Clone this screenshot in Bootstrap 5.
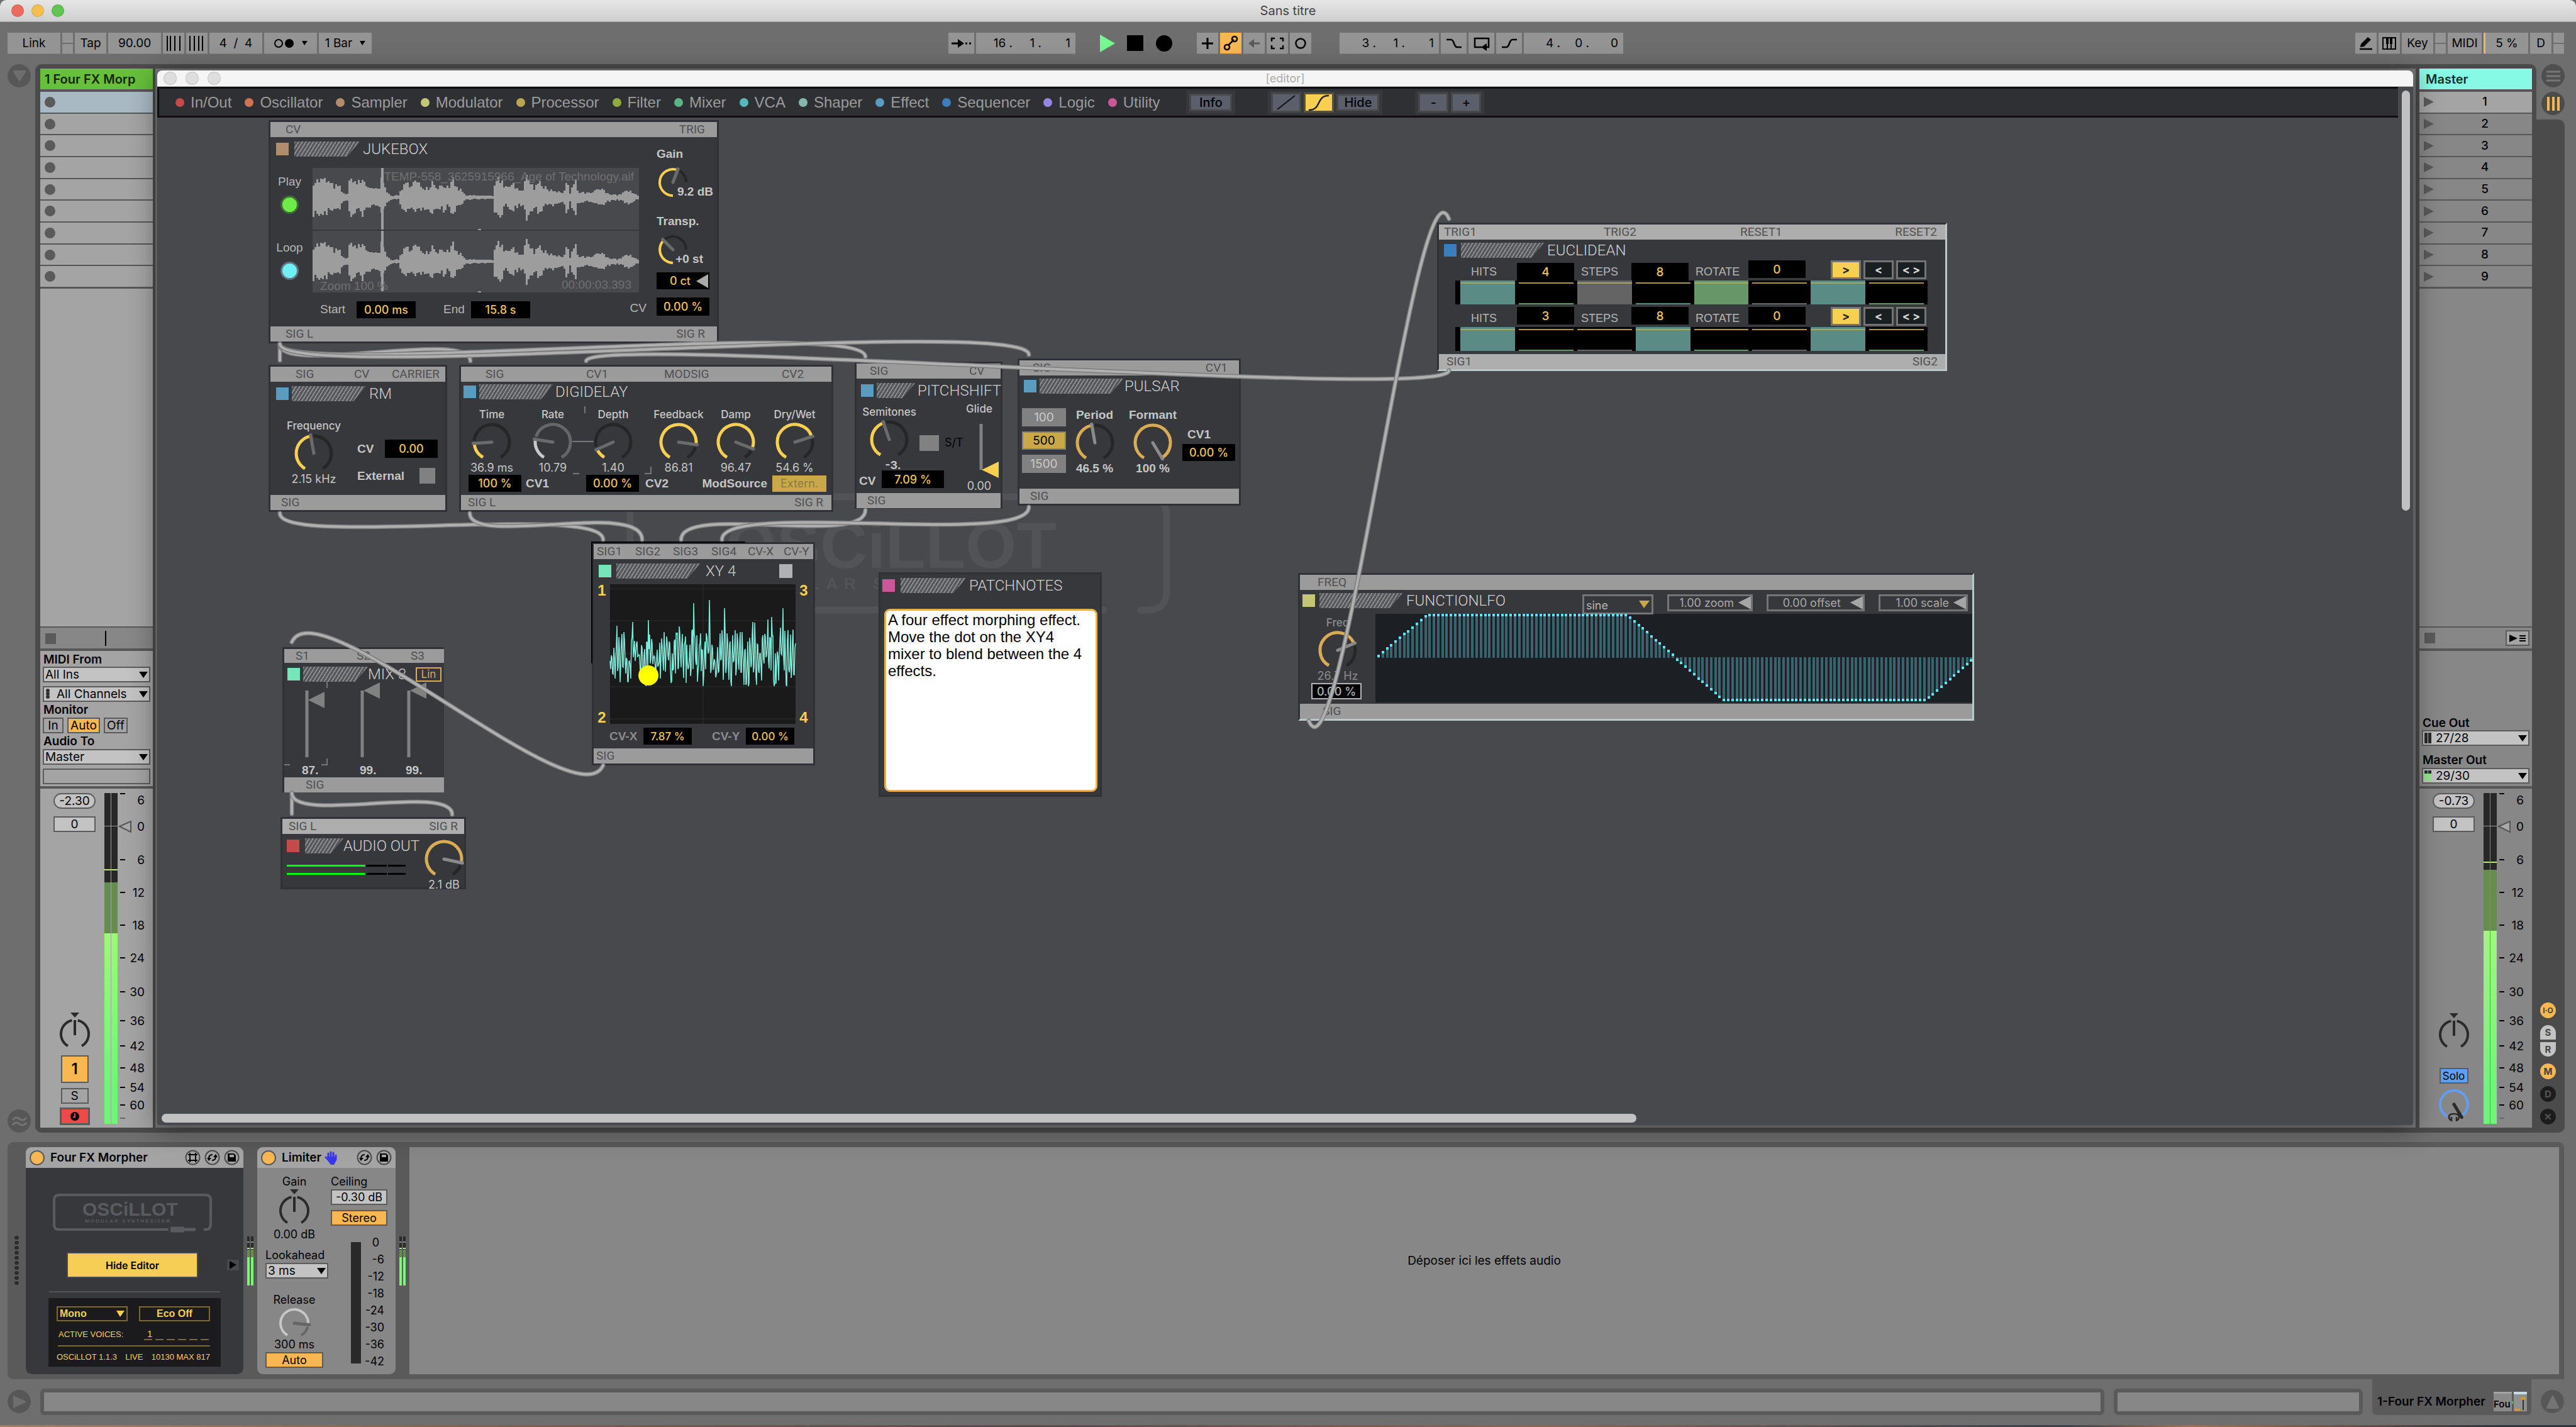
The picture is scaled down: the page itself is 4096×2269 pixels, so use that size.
<!DOCTYPE html>
<html lang="fr">
<head>
<meta charset="utf-8">
<meta name="viewport" content="width=device-width, initial-scale=1">
<title>Sans titre</title>
<link href="https://cdn.jsdelivr.net/npm/bootstrap@5.3.0/dist/css/bootstrap.min.css" rel="stylesheet">
<style>
  :root { --ui: Inter, "Open Sans", sans-serif; --ar: "Liberation Sans", Arial, sans-serif; --ro: Roboto, "Liberation Sans", sans-serif; }
  body { background: #6e6e6e; font-family: var(--ui); font-size: 19px; line-height: 24px; color: #000; min-height: 100vh; overflow-x: hidden; }
  button, input, select, textarea { font-family: inherit; color: inherit; border-radius: 0; margin: 0; }
  svg { display: block; overflow: visible; flex-shrink: 0; }
  .w6 { font-weight: 600; }

  /* window title */
  .win-title { height: 35px; background: linear-gradient(#e6e6e6, #cecece); border-bottom: 1px solid #a5a5a5; border-radius: 10px 10px 0 0; color: #444; font-size: 20px; padding: 0 18px; display: grid; grid-template-columns: 1fr auto 1fr; align-items: center; }
  .lights { display: flex; gap: 12px; }
  .lights i { width: 20px; height: 20px; border-radius: 50%; border: 1px solid #0002; }

  /* transport */
  .transport { height: 67px; padding: 0 19px 0 12px; display: grid; grid-template-columns: 1fr auto 1fr; align-items: center; }
  .tb { height: 33px; padding: 0; border: 0; background: #949494; display: flex; align-items: center; justify-content: center; gap: 12px; font-size: 19px; line-height: 24px; box-shadow: 0 1px 0 #828282; }
  .tb.on { background: #f8b750; }
  .tb.w17 { width: 17px; } .tb.w34 { width: 34px; } .tb.w41 { width: 41px; } .tb.w50 { width: 50px; } .tb.w54 { width: 54px; } .tb.w71 { width: 71px; } .tb.w84 { width: 84px; } .tb.w158 { width: 158px; }
  .tb.w17::before { content: ""; width: 17px; height: 2px; background: #6e6e6e; }
  .g3 { gap: 3px; }
  .pos { justify-content: flex-end; gap: 0; padding-right: 8px; }
  .pos span { width: 46px; text-align: right; }
  .plays { display: flex; align-items: center; gap: 19px; padding: 0 36px; }
  .loopset { margin-left: 42px; }
  .bare { background: none; border: 0; padding: 0; }
  .cpu { border-left: 3px solid #f8b750; }

  /* session view */
  .side-l { width: 56px; padding-left: 12px; }
  .rnd { width: 37px; height: 37px; border: 0; padding: 0; border-radius: 50%; background: #575757; display: flex; align-items: center; justify-content: center; }
  .frame { background: #4b4b4b; padding: 7px 7px 8px 8px; border-radius: 10px 10px 0 10px; min-width: 0; }
  .side-r { width: 45px; margin-right: 18px; }
  .side-r .top-r { height: 88px; background: #6e6e6e; border-bottom-left-radius: 6px; gap: 7px; }
  .side-r .low-r { background: #4b4b4b; border-radius: 0 10px 10px 0; padding: 0 14px 13px 6px; }
  .track { width: 179px; background: #575757; }
  .track .t-head { height: 33px; padding: 0 7px; margin-bottom: 4px; display: flex; align-items: center; font-weight: 600; font-size: 20px; white-space: nowrap; overflow: hidden; }
  .slots { height: 310px; gap: 2px; margin-bottom: 3px; }
  .slot { background: var(--tc); padding: 0 0 0 7px; border: 0; display: grid; grid-template-columns: 16px 1fr; align-items: center; font-size: 19px; font-weight: 500; }
  .slot i { width: 17px; height: 17px; border-radius: 50%; background: #5a5a5a; }
  .slot span { padding-left: 6px; text-align: center; }
  .slot.sel { background: #a9b9c3; }
  .blank, .stoprow, .io, .mixer { background: var(--tc); }
  .blank { margin-bottom: 2px; }
  .stoprow { height: 33px; margin-bottom: 4px; background: #878787; padding: 0 4px 0 7px; }
  .io { height: 215px; margin-bottom: 4px; padding: 0 4px; }
  .io .lab { height: 25px; padding-left: 1px; font-weight: 600; display: flex; align-items: center; white-space: nowrap; }
  .io .lab:first-child { padding-top: 2px; }
  .sel-live { height: 25px; width: 100%; border: 2px solid #5b5b5b; background-color: #c3c3c3; padding: 0 20px 0 2px; font-size: 19px; line-height: 20px; appearance: none; background-image: url("data:image/svg+xml,%3Csvg xmlns='http://www.w3.org/2000/svg' width='14' height='10'%3E%3Cpath d='M0 0h14L7 10z'/%3E%3C/svg%3E"); background-repeat: no-repeat; background-position: right 2px center; }
  .sel-in { padding-left: 20px; }
  .mt6 { margin-top: 6px; }
  .bx { height: 25px; border: 2px solid #5b5b5b; background: none; padding: 0; font-size: 19px; line-height: 20px; text-align: center; }
  .bx.lit { background: #f8b750; }
  .mixer { height: 539px; padding: 7px 0 4px 8px; }
  .mx { width: 93px; }
  .mx .bx, .mx input { background: #c3c3c3; width: 67px; }
  .mx input { margin: 12px 0 auto; }
  .mx .act { width: 44px; height: 44px; background: #f8b750; font-size: 24px; }
  .mx .solo { width: 44px; background: none; margin: 8px 0 6px; }
  .mx .arm { width: 48px; height: 28px; background: #ee4a48; border-width: 3px; }
  .mx .cue { width: 46px; background: #5f9ffa; font-size: 17px; }
  .pill { border-radius: 13px; }
  .hp { width: 25px; height: 25px; border-radius: 50%; font-size: 15px; font-weight: 700; border: 0; padding: 0; color: #444; background: #c3c3c3; line-height: 24px; margin-top: 11px; }
  .hp.or { background: #f8b750; } .hp.dk { background: #1c1c1c; color: #555; }
  .hp.io-b { font-size: 12px; }
  .hp.up { border-radius: 13px 13px 0 0; height: 23px; } .hp.dn { border-radius: 0 0 13px 13px; height: 23px; margin-top: 4px; }

  /* plug-in editor window */
  .backdrop-x { background: #777; padding: 3px 4px 4px 3px; border-left: 0; min-width: 0; }
  .editor { background: #48494c; border-radius: 8px 8px 4px 4px; box-shadow: 0 6px 44px 2px rgba(0,0,0,.38); overflow: hidden; position: relative; z-index: 2; min-width: 0; }
  .shade { position: relative; z-index: 2; }
  .ed-title { height: 26px; background: #f5f5f5; color: #aaa; font-size: 18px; padding: 0 10px; display: grid; grid-template-columns: 1fr auto 1fr; align-items: center; border-bottom: 1px solid #bbb; }
  .ed-title .lights { gap: 14px; }
  .ed-title .lights i { width: 21px; height: 21px; background: #dedede; }
  .ed-bar { height: 49px; background: #2f3034; border: 3px solid #0e0e10; border-right-width: 0; padding: 0 0 0 26px; font-family: var(--ar); font-size: 24px; color: #9b9b9b; }
  .cats { display: flex; gap: 21px; margin: 0 42px 0 0; padding: 0; list-style: none; }
  .cats a { color: inherit; text-decoration: none; display: flex; align-items: center; gap: 10px; }
  .cats i { width: 14px; height: 14px; border-radius: 50%; }
  .grp { background: #37383b; height: 38px; display: flex; align-items: center; gap: 4px; padding: 0 5px; margin-right: 52px; }
  .eb { height: 32px; width: 48px; border: 3px solid #46484a; background: #5b5f6b; color: #000; padding: 0; font: 500 20px/20px var(--ui); display: flex; align-items: center; justify-content: center; }
  .eb.wide { width: 68px; height: 28px; }
  .eb.on { background: #f9cf52; border-color: #5a5337; }
  .vgut { width: 24px; padding: 6px 5px 0 6px; }
  .vgut i, .hgut i { display: block; background: #c1c1c1; border-radius: 7px; }
  .vgut i { height: 668px; }
  .hgut { height: 18px; padding: 0 0 4px 7px; }
  .hgut i { height: 14px; width: 65.5%; }
  .canvas { position: relative; overflow: hidden; }
  .cables, .wmark { position: absolute; left: 0; top: 0; width: 100%; height: 100%; pointer-events: none; }

  /* patch modules */
  .osc { position: absolute; border: 3px solid #303136; background: #37383c; color: #c6c6c6; font: 17px/22px var(--ui); display: flex; flex-direction: column; }
  .ports { height: 24px; background: #9b9b9b; color: #505050; font: 19px/24px var(--ro); display: grid; flex-shrink: 0; white-space: nowrap; }
  .lite .ports { background: #adadad; }
  .lite { border-right: 3px solid #b9c9c9; border-bottom: 3px solid #b9c9c9; }
  .ttl { display: flex; align-items: center; height: 24px; padding-left: 9px; font: 300 24px/24px var(--ro); color: #d0d0d0; white-space: nowrap; flex-shrink: 0; }
  .ttl .sq { width: 20px; height: 20px; flex-shrink: 0; }
  .hatch { height: 24px; flex-shrink: 0; margin: 0 5px 0 9px; background: repeating-linear-gradient(122deg, #8b8b8b 0 2px, #55565a 2px 5px); clip-path: polygon(0 0, 100% 0, calc(100% - 20px) 100%, 0 100%); }
  .blue { background: #5a9bc0; } .mint { background: #76e5b9; } .pink { background: #cb5799; } .redd { background: #c54a49; } .tan { background: #b18d6b; } .deep { background: #3c7dbe; } .lime { background: #c4c677; }
  .kc { display: flex; flex-direction: column; align-items: center; line-height: 22px; font-weight: 500; white-space: nowrap; }
  .kc svg { margin: 2px 0 -1px; }
  .kc span:last-child { font-size: 18px; font-weight: 400; }
  .ab { font-family: var(--ar); font-weight: 700; font-size: 19px; }
  .kc.ab span:last-child { font-size: 19px; font-weight: 700; }
  .an { font-family: var(--ar); font-size: 19px; color: #b5b5b5; }
  .num { background: #000; border: 0; color: #eec45c; text-align: center; padding: 0; width: 84px; height: 27px; font: 500 18px/24px var(--ui); border-radius: 0; }
  .num.n77 { width: 77px; font-size: 17px; } .num.n91 { width: 91px; } .num.n94 { width: 94px; } .num.n99 { width: 99px; }
  .tgl { appearance: none; background: #818181; width: 25px; height: 25px; margin: 0; }
  .corner { margin-top: auto; }
  .p-sig { padding-left: 17px; }

  .m-juke { left: 177px; top: 4px; width: 716px; height: 355px; }
  .m-juke .ports { grid-template-columns: 1fr auto; padding: 0 19px 0 24px; }
  .m-juke .jl { width: 586px; }
  .m-juke .jr { width: 90px; margin-left: 28px; padding-top: 16px; }
  .m-juke .led-col { width: 67px; padding-right: 6px; line-height: 28px; }
  .led { width: 29px; height: 29px; border-radius: 50%; border: 3px solid #3f6e33; padding: 0; background: #6eea49; }
  .led.cy { border-color: #5d7683; background: #70f0f3; }
  .wave { height: 198px; width: 519px; background: #48494c; }
  .stack { display: grid; } .stack > * { grid-area: 1 / 1; }
  .stack span { align-self: end; justify-self: end; }
  .cents { display: flex; align-items: center; justify-content: flex-end; gap: 9px; margin-top: 10px; padding-right: 2px; }

  .m-rm { left: 177px; top: 393px; width: 284px; height: 234px; }
  .m-rm .p-in { grid-template-columns: 93px 60px auto; padding-left: 40px; }
  .m-digi { left: 480px; top: 393px; width: 595px; height: 234px; }
  .m-digi .p-in { grid-template-columns: 160px 124px 187px auto; padding-left: 39px; }
  .m-digi .p-out { grid-template-columns: 1fr auto; padding: 0 13px 0 11px; }
  .m-digi .knobs { display: grid; grid-template-columns: 98px 96px 96px 112px 70px 117px; margin-top: 13px; }
  .m-pitch { left: 1109px; top: 388px; width: 235px; height: 234px; }
  .m-pitch .p-in { grid-template-columns: 158px auto; padding-left: 21px; }
  .m-puls { left: 1368px; top: 383px; width: 355px; height: 234px; }
  .m-puls .p-in { grid-template-columns: 1fr auto; padding: 0 18px 0 21px; }
  .pb { width: 70px; height: 29px; border: 0; background: #818181; color: #c9c9c9; padding: 0; font: 19px/24px var(--ui); }
  .pb.on { background: #c9a847; color: #000; border: 2px solid #818181; }
  .pb.ext { background: #c9a847; color: #8d7a45; width: 86px; height: 26px; font-size: 18px; }
  .m-xy { left: 691px; top: 675px; width: 355px; height: 355px; }
  .m-xy .p-in { grid-template-columns: 61px 60px 61px 58px 57px auto; padding-left: 5px; }
  .m-xy .xyn { font: 700 24px/20px var(--ar); color: #f6ce55; display: flex; flex-direction: column; justify-content: space-between; align-items: center; width: 26px; }
  .m-xy .cvs { padding: 6px 30px 0 25px; color: #8b8b8b; }
  .m-xy .cvs label { width: 54px; }
  .scope { width: 295px; height: 222px; background: #1a1a1a; }
  .m-patch { left: 1147px; top: 723px; width: 355px; height: 357px; }
  .note { margin: 25px 4px 5px 6px; flex: 1; background: #fff; color: #000; border: 3px solid #e3b055; border-radius: 9px; font: 24px/27px var(--ar); padding: 1px 3px; resize: none; overflow: hidden; }
  .m-mix { left: 199px; top: 842px; width: 257px; height: 231px; border-right: 0; }
  .m-mix .p-in { grid-template-columns: 97px 86px auto; padding-left: 18px; height: 22px; line-height: 22px; }
  .m-mix .sl { display: grid; grid-template-columns: 92px 73px auto; padding-left: 28px; }
  .lin { width: 41px; height: 23px; border: 2px solid #d9ab55; background: none; color: #d9ab55; font: 17px/18px var(--ui); padding: 0; }
  .m-aud { left: 196px; top: 1112px; width: 295px; height: 115px; }
  .m-aud .ports { background: #adadad; grid-template-columns: 1fr auto; padding: 0 10px; }
  .hm { height: 3px; width: 189px; margin: 0 0 10px 7px; background: linear-gradient(90deg, #0f0 0 125px, #000 125px 159px, #37383c 159px 161px, #000 161px); }
  .m-euc { left: 2035px; top: 167px; width: 811px; height: 236px; }
  .m-euc .p-in { grid-template-columns: 254px 217px 1fr auto; padding: 0 13px 0 8px; }
  .m-euc .p-out { grid-template-columns: 1fr auto; padding: 0 12px; }
  .steprow { display: grid; grid-template-columns: 73px 102px 80px 102px 84px 131px auto; align-items: start; padding-left: 51px; height: 32px; margin-top: 4px; }
  .steprow label { font: 18px/24px var(--ar); color: #b5b5b5; align-self: end; margin-bottom: 2px; }
  .steprow .num { height: 28px; font-size: 19px; margin-top: 4px; }
  .steprow .num.hi { margin-top: 0; }
  .stp { margin: 0 28px 0 26px; height: 38px; background: #000; display: grid; grid-template-columns: repeat(8, 1fr); gap: 6px; padding: 0 6px 0 8px; flex-shrink: 0; }
  .stp i { border-top: 2px solid #b5943d; border-bottom: 2px solid var(--c); margin-top: 3px; }
  .stp i.f { background: var(--c); border-top-color: #a9a75a; box-shadow: 0 -3px 0 var(--c); }
  .te { --c: #5a8c85; } .gn { --c: #679668; } .gy { --c: #646464; }
  .eu { width: 48px; height: 30px; border: 3px solid #747474; background: #1a1f22; color: #d8d8d8; padding: 0; font: 700 18px/20px var(--ui); }
  .eu.on { background: #f9cf52; color: #222; }
  .m-lfo { left: 1814px; top: 724px; width: 1075px; height: 235px; }
  .m-lfo .ports { padding-left: 28px; background: #9b9b9b; }
  .fb { height: 27px; width: 142px; margin-left: 22px; border: 3px solid #757575; color: #a9a9a9; background: #37383c; font: 18px/20px var(--ui); padding: 0; display: flex; align-items: center; justify-content: flex-end; gap: 7px; }
  .fb.f136 { width: 136px; } .fb.f156 { width: 156px; }
  .fb input { background: none; border: 0; padding: 0; color: inherit; text-align: right; min-width: 0; flex: 1; font: inherit; }
  .m-lfo select { width: 113px; height: 32px; margin-left: 329px; border: 3px solid #757575; background: #37383c url("data:image/svg+xml,%3Csvg xmlns='http://www.w3.org/2000/svg' width='17' height='12'%3E%3Cpath fill='%23c9a847' d='M0 0h17L8 12z'/%3E%3C/svg%3E") no-repeat right 3px center; appearance: none; color: #b5b5b5; font: 18px/20px var(--ui); padding: 3px 0 0 3px; }
  .num.fcv { width: 80px; height: 26px; border: 2px solid #b5b5b5; margin: 0 0 0 18px; color: #b5b5b5; }
  .graph { height: 141px; background: #1c2024; }

  /* device chain */
  .chain { margin: 15px 19px 0 12px; background: #5a5a5a; border-radius: 9px 9px 0 9px; height: 377px; padding: 8px 8px 8px 0; }
  .grip { width: 29px; padding-left: 11px; }
  .grip i { display: block; width: 7px; height: 6px; border-radius: 50%; background: #2c2c2c; margin-bottom: 2px; }
  .dev { background: #878787; border-radius: 9px; overflow: hidden; }
  .dev .dh { height: 33px; background: #a4a4a4; padding: 0 6px; font-weight: 600; font-size: 19px; gap: 6px; }
  .dot-on { width: 24px; height: 24px; border-radius: 50%; border: 2px solid #5b5b5b; background: #f8b750; padding: 0; margin-right: 3px; }
  .ic { border: 0; background: none; padding: 0; width: 25px; height: 25px; }
  .d1 { width: 346px; } .d1 .db { background: #37383c; padding: 41px 34px 12px; }
  .hide-ed { width: 209px; height: 41px; background: #f6ce55; border: 2px solid #4a4b4f; font: 600 16px/20px var(--ui); padding: 0; margin-left: 31px; }
  .unf { width: 19px; height: 17px; background: #48494c; margin-right: -27px; }
  .lcd { background: #1b1b1e; height: 109px; width: 274px; color: #f6ce55; font: 13px/16px var(--ar); padding: 13px 17px 0 13px; }
  .lcd select, .lcd button { width: 113px; height: 24px; border: 2px solid #7d682f; background: none; font: 700 16px/18px var(--ar); color: #f6ce55; padding: 0 3px; }
  .lcd select { appearance: none; background: url("data:image/svg+xml,%3Csvg xmlns='http://www.w3.org/2000/svg' width='13' height='10'%3E%3Cpath fill='%23f6ce55' d='M0 0h13L6 10z'/%3E%3C/svg%3E") no-repeat right 3px center; }
  .d2 { width: 220px; font-size: 18px; } .d2 .db { padding: 10px 13px 0; }
  .d2 .la { line-height: 24px; white-space: nowrap; }
  .d2 .bx { font-size: 18px; }
  .dcol { width: 92px; }
  .mini { width: 14px; }
  .scale-col { line-height: 27px; text-align: right; }
  .drop { background: #878787; font-size: 19px; }

  /* status line */
  .status { height: 73px; padding: 0 19px 0 12px; gap: 15px; }
  .status .rnd { margin-top: 17px; }
  .sbox { height: 42px; border: 6px solid #5a5a5a; background: #878787; border-radius: 7px; margin-top: 15px; }
  .sbox.s2 { width: 396px; }
  .tab-dev { width: 253px; height: 57px; background: #5a5a5a; border-radius: 0 0 7px 7px; padding: 20px 6px 6px 8px; font-weight: 600; font-size: 19px; white-space: nowrap; flex-shrink: 0; }
  .desk { height: 3px; background: linear-gradient(90deg, #a87c60, #7c6050 20%, #5a4a4a 40%, #8a6656 60%, #38404c 80%, #a56f4e 85%, #30343c 97%); }
</style>
</head>
<body class="d-flex flex-column m-0">

<header class="win-title">
  <div class="lights"><i style="background:#ed6a5e"></i><i style="background:#f5bf4f"></i><i style="background:#61c554"></i></div>
  <div>Sans titre</div><div></div>
</header>

<nav class="transport" aria-label="Transport">
  <div class="d-flex g3">
    <button class="tb w84">Link</button><button class="tb w17" aria-label="Link state"></button>
    <button class="tb w50">Tap</button><button class="tb w84">90.00</button>
    <button class="tb w34" aria-label="Nudge down"><svg width="24" height="24"><path d="M2 0v24M7 0v24M14 0v24M22 0v24" stroke="#000" stroke-width="2"/></svg></button>
    <button class="tb w34" aria-label="Nudge up"><svg width="24" height="24"><path d="M1 0v24M8 0v24M15 0v24M21 0v24" stroke="#000" stroke-width="2"/></svg></button>
    <button class="tb w84">4 &nbsp;/&nbsp; 4</button>
    <button class="tb w84"><svg width="33" height="16"><circle cx="8" cy="8" r="6" fill="none" stroke="#000" stroke-width="2"/><circle cx="25" cy="8" r="7"/></svg><svg width="9" height="8"><path d="M0 0h9L4 7z"/></svg></button>
    <button class="tb w84">1 Bar<svg width="9" height="8"><path d="M0 0h9L4 7z"/></svg></button>
  </div>
  <div class="d-flex align-items-center g3">
    <button class="tb w41" aria-label="Follow"><svg width="32" height="16"><path d="M0 8h12M22 8h3M28 8h3" stroke="#000" stroke-width="3"/><path d="M10 1l10 7-10 7z"/></svg></button>
    <div class="tb w158 pos"><span>16 .</span><span>1 .</span><span>1</span></div>
    <div class="plays">
      <button class="bare" aria-label="Play"><svg width="24" height="28"><path d="M0 0l24 14L0 28z" fill="#73fb8f"/></svg></button>
      <button class="bare" aria-label="Stop"><svg width="26" height="25"><path d="M0 0h26v25H0z"/></svg></button>
      <button class="bare" aria-label="Record"><svg width="27" height="26"><circle cx="14" cy="13" r="13"/></svg></button>
    </div>
    <button class="tb w34" aria-label="Overdub"><svg width="18" height="18"><path d="M9 0v18M0 9h18" stroke="#000" stroke-width="3"/></svg></button>
    <button class="tb w34 on" aria-label="Automation arm"><svg width="24" height="24"><path d="M8 15l9-9" stroke="#000" stroke-width="2.5"/><circle cx="6" cy="18" r="4" fill="none" stroke="#000" stroke-width="2.5"/><circle cx="18" cy="5" r="4" fill="none" stroke="#000" stroke-width="2.5"/></svg></button>
    <button class="tb w34" aria-label="Re-enable automation"><svg width="18" height="16"><path d="M6 8h12" stroke="#5a5a5a" stroke-width="3"/><path d="M9 1L0 8l9 7z" fill="#5a5a5a"/></svg></button>
    <button class="tb w34" aria-label="Capture"><svg width="20" height="18"><path d="M1 6V1h5M14 1h5v5M19 12v5h-5M6 17H1v-5" fill="none" stroke="#000" stroke-width="2.5"/></svg></button>
    <button class="tb w34" aria-label="Session record"><svg width="18" height="18"><circle cx="9" cy="9" r="7.5" fill="none" stroke="#000" stroke-width="2.5"/></svg></button>
    <div class="tb w158 pos loopset"><span>3 .</span><span>1 .</span><span>1</span></div>
    <button class="tb w41" aria-label="Punch in"><svg width="26" height="14"><path d="M1 1h7q3 0 5 6t5 6h7" fill="none" stroke="#000" stroke-width="2.5"/></svg></button>
    <button class="tb w41" aria-label="Loop"><svg width="26" height="20"><path d="M13 16H2V2h22v14h-3" fill="none" stroke="#000" stroke-width="2.5"/><path d="M21 10v12l-9-6z"/></svg></button>
    <button class="tb w41" aria-label="Punch out"><svg width="26" height="14"><path d="M1 13h7q3 0 5-6t5-6h7" fill="none" stroke="#000" stroke-width="2.5"/></svg></button>
    <div class="tb w158 pos"><span>4 .</span><span>0 .</span><span>0</span></div>
  </div>
  <div class="d-flex g3 justify-content-end">
    <button class="tb w34" aria-label="Draw mode"><svg width="22" height="22"><path d="M14 1l5 4L8 16l-6 1 1-5z"/><path d="M1 20h20" stroke="#000" stroke-width="2.5"/></svg></button>
    <button class="tb w34" aria-label="Computer keyboard"><svg width="22" height="20"><path d="M1 1h20v18H1zM8 10v9M14 10v9" fill="none" stroke="#000" stroke-width="2"/><path d="M6 1h4v10H6zM12 1h4v10h-4z"/></svg></button>
    <button class="tb w50">Key</button><button class="tb w17" aria-label="Key in"></button>
    <button class="tb w54">MIDI</button><button class="tb w71 cpu">5 %</button>
    <button class="tb w34">D</button><button class="tb w17" aria-label="MIDI in"></button>
  </div>
</nav>

<main class="d-flex flex-grow-1">
  <aside class="side-l d-flex flex-column justify-content-between flex-shrink-0">
    <button class="rnd" aria-label="Show browser"><svg width="22" height="18"><path d="M2 0h18q2 0 1 2L12 17h-2L1 2Q0 0 2 0z" fill="#6e6e6e"/></svg></button>
    <button class="rnd" aria-label="Groove pool"><svg width="24" height="18"><path d="M1 7q5-7 11-2t11-2M1 15q5-7 11-2t11-2" fill="none" stroke="#747474" stroke-width="3"/></svg></button>
  </aside>

  <div class="frame d-flex flex-grow-1">
    <section class="track d-flex flex-column flex-shrink-0 me-1" style="--tc:#a4a4a4" id="trk1">
      <div class="t-head" style="background:#67bf3a;color:#152808">1 Four FX Morp</div>
      <div class="slots d-flex flex-column">
        <button class="slot sel flex-fill" aria-label="Clip 1"><i></i></button><button class="slot flex-fill" aria-label="Clip 2"><i></i></button><button class="slot flex-fill" aria-label="Clip 3"><i></i></button><button class="slot flex-fill" aria-label="Clip 4"><i></i></button><button class="slot flex-fill" aria-label="Clip 5"><i></i></button><button class="slot flex-fill" aria-label="Clip 6"><i></i></button><button class="slot flex-fill" aria-label="Clip 7"><i></i></button><button class="slot flex-fill" aria-label="Clip 8"><i></i></button><button class="slot flex-fill" aria-label="Clip 9"><i></i></button>
      </div>
      <div class="blank flex-grow-1"></div>
      <div class="stoprow d-flex align-items-center"><svg width="100" height="26"><path d="M1 5h17v17H1z" fill="#5a5a5a"/><path d="M97 1v24" stroke="#000" stroke-width="2"/></svg></div>
      <div class="io">
        <label class="lab" for="mf">MIDI From</label>
        <select class="sel-live" id="mf"><option>All Ins</option></select>
        <div class="stack mt6"><select class="sel-live sel-in" aria-label="MIDI channel"><option>All Channels</option></select><svg class="ms-1 align-self-center" width="8" height="17"><g fill="#333"><circle cx="4" cy="3" r="3"/><circle cx="4" cy="8" r="3"/><circle cx="4" cy="13" r="3"/></g></svg></div>
        <div class="lab">Monitor</div>
        <div class="d-flex" style="gap:6px"><button class="bx" style="width:33px">In</button><button class="bx lit" style="width:52px">Auto</button><button class="bx" style="width:38px">Off</button></div>
        <label class="lab" for="at">Audio To</label>
        <select class="sel-live" id="at"><option>Master</option></select>
        <div class="bx mt6"></div>
      </div>
      <div class="mixer d-flex">
        <div class="mx d-flex flex-column align-items-center">
          <button class="bx pill">-2.30</button>
          <input class="bx" value="0" aria-label="Volume">
          <svg class="knob mb-2" data-pan="1" width="50" height="60"></svg>
          <button class="bx act w6">1</button>
          <button class="bx solo">S</button>
          <button class="bx arm" aria-label="Arm"><svg class="mx-auto" width="18" height="18"><circle cx="9" cy="9" r="7"/><path d="M9 4v6H6" stroke="#ee4a48" stroke-width="2" fill="none"/></svg></button>
        </div>
        <svg class="meter" width="78" height="526" data-peak="122" data-mid="142" data-lev="223"></svg>
      </div>
    </section>

    <div class="backdrop-x flex-grow-1 d-flex shade">
      <section class="editor flex-grow-1 d-flex flex-column">
        <div class="ed-title"><div class="lights"><i></i><i></i><i></i></div><div>[editor]</div><div></div></div>
        <div class="d-flex flex-grow-1">
          <div class="d-flex flex-column flex-grow-1" style="min-width:0">
            <div class="ed-bar d-flex align-items-center">
              <ul class="cats" id="cats"></ul>
              <div class="grp"><button class="eb wide">Info</button></div>
              <div class="grp"><button class="eb" aria-label="Straight cables"><svg width="30" height="26"><path d="M1 24L29 2" stroke="#111" stroke-width="2"/></svg></button><button class="eb on" aria-label="Curved cables"><svg width="34" height="26"><path d="M1 25C22 25 12 2 33 2" fill="none" stroke="#222" stroke-width="2.5"/></svg></button><button class="eb wide">Hide</button></div>
              <div class="grp"><button class="eb">-</button><button class="eb">+</button></div>
            </div>

            <div class="canvas flex-grow-1">
              <svg class="wmark" aria-hidden="true"><g transform="translate(-250 -187)" fill="none" stroke="#525357" stroke-width="11">
                <path d="M1755 970H1032Q1002 970 1002 940V820Q1002 790 1032 790H1825Q1855 790 1855 820V940Q1855 970 1825 970H1814" stroke-linecap="round"/>
                <path d="M1640 970h110" stroke-width="18"/>
                <text x="1154" y="903" fill="#525357" stroke="none" font-family="Liberation Sans" font-weight="700" font-size="104">OSCiLLOT</text>
                <text x="1168" y="937" fill="#525357" stroke="none" font-family="Liberation Sans" font-weight="700" font-size="26" letter-spacing="10">MODULAR SYNTHESIZER</text></g></svg>

              <article class="osc m-juke">
                <div class="ports"><span>CV</span><span>TRIG</span></div>
                <div class="d-flex">
                  <div class="jl">
                    <div class="ttl" style="margin:7px 0 18px"><i class="sq tan"></i><i class="hatch" style="width:104px"></i>JUKEBOX</div>
                    <div class="d-flex">
                      <div class="led-col d-flex flex-column align-items-center an pt-2">
                        <span>Play</span><button class="led mt-2" aria-label="Play"></button>
                        <span style="margin-top:40px">Loop</span><button class="led cy mt-2" aria-label="Loop"></button>
                      </div>
                      <svg class="wave" id="wave"></svg>
                    </div>
                  </div>
                  <div class="jr ab">
                    <div>Gain</div>
                    <div class="stack mt-2"><svg class="knob" width="52" height="52" data-r="24" data-from="-180" data-to="90" data-val="21"></svg><span>9.2 dB</span></div>
                    <div style="margin-top:25px">Transp.</div>
                    <div class="stack mt-2"><svg class="knob" width="52" height="52" data-r="24" data-from="-180" data-to="90" data-val="-45"></svg><span style="margin-right:16px">+0 st</span></div>
                    <div class="num cents">0 ct<svg width="19" height="22"><path d="M0 11L19 0v22z" fill="#aaa"/></svg></div>
                  </div>
                </div>
                <div class="d-flex an align-items-start" style="padding:8px 12px 0 79px">
                  <label for="js" class="mt-2" style="width:58px">Start</label><input id="js" class="num n94 mt6" value="0.00 ms">
                  <label for="je" class="mt-2" style="width:44px;margin-left:44px">End</label><input id="je" class="num n94 mt6" value="15.8 s">
                  <label for="jc" class="ms-auto me-3 mt6">CV</label><input id="jc" class="num" style="height:29px" value="0.00 %">
                </div>
                <div class="ports corner"><span>SIG L</span><span>SIG R</span></div>
              </article>

              <article class="osc m-rm">
                <div class="ports p-in"><span>SIG</span><span>CV</span><span>CARRIER</span></div>
                <div class="ttl" style="margin-top:7px"><i class="sq blue"></i><i class="hatch" style="width:118px;margin-left:5px"></i>RM</div>
                <div class="d-flex" style="padding:28px 12px 0 16px">
                  <div class="kc" style="width:106px"><span>Frequency</span><svg class="knob" data-val="-10"></svg><span>2.15 kHz</span></div>
                  <div class="flex-grow-1 d-flex flex-column ab" style="padding:33px 0 0 16px;gap:16px">
                    <div class="d-flex align-items-center justify-content-between"><label for="rc">CV</label><input id="rc" class="num" style="height:29px" value="0.00"></div>
                    <div class="d-flex align-items-center justify-content-between pe-1"><label for="rx">External</label><input type="checkbox" id="rx" class="tgl"></div>
                  </div>
                </div>
                <div class="ports p-sig corner"><span>SIG</span></div>
              </article>

              <article class="osc m-digi">
                <div class="ports p-in"><span>SIG</span><span>CV1</span><span>MODSIG</span><span>CV2</span></div>
                <div class="ttl" style="margin-top:4px;padding-left:4px"><i class="sq blue"></i><i class="hatch" style="width:118px;margin:0 3px 0 5px"></i>DIGIDELAY</div>
                <div class="knobs">
                  <div class="kc"><span>Time</span><svg class="knob" data-val="-94"></svg><span>36.9 ms</span></div>
                  <div class="kc"><span>Rate</span><svg class="knob" data-val="-81" data-c="#c8c8c8" data-b="#666"></svg><span>10.79</span></div>
                  <div class="kc"><span>Depth</span><svg class="knob" data-val="-114"></svg><span>1.40</span></div>
                  <div class="kc"><span>Feedback</span><svg class="knob" data-val="98"></svg><span>86.81</span></div>
                  <div class="kc"><span>Damp</span><svg class="knob" data-val="111"></svg><span>96.47</span></div>
                  <div class="kc"><span>Dry/Wet</span><svg class="knob" data-val="72"></svg><span>54.6 %</span></div>
                </div>
                <div class="d-flex align-items-center ab" style="padding:0 8px 0 12px">
                  <input id="d1" class="num" value="100 %"><label for="d1" style="margin-left:7px;width:96px">CV1</label>
                  <input id="d2" class="num" value="0.00 %"><label for="d2" style="margin-left:10px">CV2</label>
                  <label for="dm" class="ms-auto me-2">ModSource</label><button id="dm" class="pb ext">Extern.</button>
                </div>
                <div class="ports p-out corner"><span>SIG L</span><span>SIG R</span></div>
              </article>

              <article class="osc m-pitch">
                <div class="ports p-in"><span>SIG</span><span>CV</span></div>
                <div class="ttl" style="margin-top:7px;padding-left:7px"><i class="sq blue"></i><i class="hatch" style="width:61px;margin:0 4px 0 5px"></i>PITCHSHIFT</div>
                <div class="d-flex" style="padding-left:4px;height:151px">
                  <div style="width:167px">
                    <div class="d-flex" style="height:115px;padding-top:11px"><div class="kc" style="width:96px"><span>Semitones</span><svg class="knob" data-val="-19"></svg><span style="margin-left:12px"><b>-3.</b></span></div>
                      <div class="d-flex align-items-center mt-4" style="gap:9px;height:72px"><input id="st" type="checkbox" class="tgl" style="width:31px"><label for="st" style="color:#000;font-size:18px">S/T</label></div></div>
                    <div class="d-flex align-items-end ab"><label for="pc" style="width:36px">CV</label><input id="pc" class="num n99" style="height:28px" value="7.09 %"></div>
                  </div>
                  <div class="kc" style="width:56px;padding:6px 8px 0 0"><span>Glide</span><svg width="44" height="90"><path d="M25 11v73" stroke="#818181" stroke-width="5"/><path d="M26 84l27-13v26z" fill="#f9cf52"/></svg><span style="margin-top:10px">0.00</span></div>
                </div>
                <div class="ports p-sig corner"><span>SIG</span></div>
              </article>

              <article class="osc m-puls">
                <div class="ports p-in"><span>SIG</span><span>CV1</span></div>
                <div class="ttl" style="margin-top:5px;padding-left:7px"><i class="sq blue"></i><i class="hatch" style="width:133px;margin:0 2px 0 5px"></i>PULSAR</div>
                <div class="d-flex" style="padding:23px 6px 0 4px">
                  <div class="d-flex flex-column" style="gap:8px"><button class="pb">100</button><button class="pb on">500</button><button class="pb">1500</button></div>
                  <div class="kc ab" style="width:91px"><span>Period</span><svg class="knob" data-val="-10" data-c="#d9ab55" data-n="#8a8a8a"></svg><span>46.5 %</span></div>
                  <div class="kc ab" style="width:94px"><span>Formant</span><svg class="knob" data-val="149" data-c="#d9ab55" data-n="#8a8a8a"></svg><span>100 %</span></div>
                  <div class="ab" style="padding-top:31px"><label for="uc" class="ps-2 d-block mb-1">CV1</label><input id="uc" class="num d-block" value="0.00 %"></div>
                </div>
                <div class="ports p-sig corner"><span>SIG</span></div>
              </article>

              <article class="osc m-xy">
                <div class="ports p-in"><span>SIG1</span><span>SIG2</span><span>SIG3</span><span>SIG4</span><span>CV-X</span><span>CV-Y</span></div>
                <div class="ttl" style="margin-top:7px;padding:0 33px 0 8px"><i class="sq mint"></i><i class="hatch" style="width:133px;margin:0 9px 0 8px"></i>XY 4<input type="checkbox" class="tgl ms-auto" style="background:#b1b1b3;width:21px;height:22px" aria-label="Lock"></div>
                <div class="d-flex" style="margin-top:9px"><div class="xyn"><span>1</span><span>2</span></div><svg class="scope" id="scope"></svg><div class="xyn"><span>3</span><span>4</span></div></div>
                <div class="d-flex align-items-center ab cvs"><label for="cx">CV-X</label><input id="cx" class="num n77" value="7.87 %"><label for="cy" class="ms-auto">CV-Y</label><input id="cy" class="num n77" value="0.00 %"></div>
                <div class="ports corner ps-1"><span>SIG</span></div>
              </article>

              <article class="osc m-patch">
                <div class="ttl" style="margin-top:6px;padding-left:3px"><i class="sq pink"></i><i class="hatch" style="width:104px"></i>PATCHNOTES</div>
                <textarea class="note" aria-label="Patch notes">A four effect morphing effect. Move the dot on the XY4 mixer to blend between the 4 effects.</textarea>
              </article>

              <article class="osc m-mix">
                <div class="ports p-in"><span>S1</span><span>S2</span><span>S3</span></div>
                <div class="ttl" style="margin-top:6px;padding:0 4px 0 5px"><i class="sq mint"></i><i class="hatch" style="width:103px;margin:0 0 0 5px"></i>MIX 3<button class="ms-auto lin">Lin</button></div>
                <div class="sl ab">
                  <div><svg width="40" height="130"><path d="M8 14v106" stroke="#818181" stroke-width="5"/><path d="M10 29l26-13v26z" fill="#818181"/></svg>87.</div>
                  <div><svg width="40" height="130"><path d="M4 14v106" stroke="#818181" stroke-width="5"/><path d="M6 14L32 1v26z" fill="#818181"/></svg>99.</div>
                  <div><svg width="40" height="130"><path d="M5 14v106" stroke="#818181" stroke-width="5"/><path d="M7 14L33 1v26z" fill="#818181"/></svg>99.</div>
                </div>
                <div class="ports corner" style="padding-left:34px"><span>SIG</span></div>
              </article>

              <article class="osc m-aud">
                <div class="ports"><span>SIG L</span><span>SIG R</span></div>
                <div class="d-flex">
                  <div style="width:225px"><div class="ttl" style="margin:7px 0 18px;padding-left:7px"><i class="sq redd"></i><i class="hatch" style="width:61px;margin-right:0"></i>AUDIO OUT</div>
                    <div class="hm"></div><div class="hm"></div></div>
                  <div class="kc" style="width:64px;padding-top:7px"><svg class="knob" data-val="102" data-c="#d9ab55" data-n="#8a8a8a"></svg><span>2.1 dB</span></div>
                </div>
              </article>

              <article class="osc lite m-euc">
                <div class="ports p-in"><span>TRIG1</span><span>TRIG2</span><span>RESET1</span><span>RESET2</span></div>
                <div class="ttl" style="margin-top:5px;padding-left:8px"><i class="sq deep"></i><i class="hatch" style="width:132px;margin:0 5px 0 7px"></i>EUCLIDEAN</div>
                <div class="steprow"><label for="h1">HITS</label><input id="h1" class="num n91" value="4"><label for="s1">STEPS</label><input id="s1" class="num n91" value="8"><label for="r1">ROTATE</label><input id="r1" class="num n91 hi" value="0"><div class="d-flex gap-1"><button class="eu on">&gt;</button><button class="eu">&lt;</button><button class="eu">&lt; &gt;</button></div></div>
                <div class="stp"><i class="f te"></i><i class="gn"></i><i class="f gy"></i><i class="te"></i><i class="f gn"></i><i class="gy"></i><i class="f te"></i><i class="gn"></i></div>
                <div class="steprow"><label for="h2">HITS</label><input id="h2" class="num n91 hi" value="3"><label for="s2">STEPS</label><input id="s2" class="num n91 hi" value="8"><label for="r2">ROTATE</label><input id="r2" class="num n91 hi" value="0"><div class="d-flex gap-1"><button class="eu on">&gt;</button><button class="eu">&lt;</button><button class="eu">&lt; &gt;</button></div></div>
                <div class="stp"><i class="f te"></i><i class="gn"></i><i class="gy"></i><i class="f te"></i><i class="gn"></i><i class="gy"></i><i class="f te"></i><i class="gn"></i></div>
                <div class="ports p-out corner"><span>SIG1</span><span>SIG2</span></div>
              </article>

              <article class="osc lite m-lfo">
                <div class="ports"><span>FREQ</span></div>
                <div class="d-flex flex-grow-1">
                  <div style="width:120px">
                    <div class="ttl" style="margin-top:5px;padding-left:4px"><i class="sq lime"></i><i class="hatch" style="width:132px;margin:0 6px 0 7px"></i>FUNCTIONLFO</div>
                    <div class="kc" style="padding-top:12px;color:#8b8b8b"><span>Freq</span><svg class="knob" data-val="67" data-c="#d9ab55" data-n="#8a8a8a"></svg><span>26.7 Hz</span></div>
                    <input class="num fcv d-block" value="0.00 %" aria-label="Freq CV">
                  </div>
                  <div class="flex-grow-1">
                    <div class="d-flex align-items-start" style="padding-top:7px;height:38px">
                      <select aria-label="Shape"><option>sine</option></select>
                      <div class="fb f136"><input value="1.00 zoom" aria-label="Zoom"><svg width="20" height="21"><path d="M0 10L20 0v21z" fill="#a5a5a5"/></svg></div>
                      <div class="fb f156"><input value="0.00 offset" aria-label="Offset" class="pe-2"><svg width="20" height="21"><path d="M0 10L20 0v21z" fill="#a5a5a5"/></svg></div>
                      <div class="fb"><input value="1.00 scale" aria-label="Scale"><svg width="20" height="21"><path d="M0 10L20 0v21z" fill="#a5a5a5"/></svg></div>
                    </div>
                    <svg class="graph w-100" id="lfo"></svg>
                  </div>
                </div>
                <div class="ports corner" style="padding-left:36px"><span>SIG</span></div>
              </article>

              <svg class="cables" aria-hidden="true"><g transform="translate(-250 -187)" fill="none" stroke-linecap="round">
                <path d="M941 1054V862H1184" stroke="#000" stroke-width="2"/>
                <path d="M910 702h34M930 646v11M911 753h10M1025 753h10v-11M520 1083v11M452 1216h9M511 1216h9v-10" stroke="#777" stroke-width="2" stroke-linecap="butt"/>
                <g id="wires"></g></g></svg>
            </div>
          </div>
          <div class="vgut"><i></i></div>
        </div>
        <div class="hgut"><i></i></div>
      </section>
    </div>

    <section class="track d-flex flex-column flex-shrink-0" style="--tc:#878787;margin-left:6px">
      <div class="t-head" style="background:#87fae6;color:#16302c;padding-left:10px">Master</div>
      <div class="slots d-flex flex-column" id="scenes"></div>
      <div class="blank flex-grow-1"></div>
      <div class="stoprow d-flex align-items-center justify-content-between"><svg width="18" height="17"><path d="M1 0h17v17H1z" fill="#5a5a5a"/></svg><button class="bx d-flex align-items-center justify-content-center" style="width:38px;background:#a4a4a4" aria-label="Scene launch"><svg width="26" height="12"><path d="M0 0l13 6-13 6z"/><path d="M16 2h10M16 6h10M16 10h10" stroke="#000" stroke-width="2"/></svg></button></div>
      <div class="io d-flex flex-column justify-content-end" style="padding-bottom:4px">
        <label class="lab" for="co">Cue Out</label>
        <div class="stack"><select class="sel-live sel-in" id="co"><option>27/28</option></select><svg class="ms-1 align-self-center" width="12" height="17"><path d="M0 0h5v17H0zM6 0h5v17H6z" fill="#2a2a2a"/></svg></div>
        <label class="lab" for="mo" style="margin-top:10px">Master Out</label>
        <div class="stack"><select class="sel-live sel-in" id="mo"><option>29/30</option></select><svg class="ms-1 align-self-center" width="12" height="17"><path d="M0 0h5v5H0zM6 0h5v5H6z" fill="#2a2a2a"/><path d="M0 5h5v12H0zM6 5h5v12H6z" fill="#7cf77a"/></svg></div>
      </div>
      <div class="mixer d-flex">
        <div class="mx d-flex flex-column align-items-center">
          <button class="bx pill">-0.73</button>
          <input class="bx" value="0" aria-label="Master volume">
          <svg class="knob" data-pan="1" width="50" height="60" style="margin-bottom:27px"></svg>
          <button class="bx cue">Solo</button>
          <svg class="knob my-2" data-r="25" width="50" height="50" data-val="149" data-c="#5f9ffa" data-n="#2a2a2a" data-cue="1"></svg>
        </div>
        <svg class="meter" width="78" height="526" data-peak="110" data-mid="122" data-lev="219"></svg>
      </div>
    </section>
  </div>

  <aside class="side-r d-flex flex-column flex-shrink-0">
    <div class="top-r d-flex flex-column align-items-end">
      <button class="rnd" style="background:#4f4f4f" aria-label="Arrangement view"><svg width="22" height="18"><path d="M0 2h22M0 9h22M0 16h22" stroke="#777" stroke-width="3"/></svg></button>
      <button class="rnd" style="background:#4b4b4b" aria-label="Session view"><svg width="20" height="22"><path d="M2 0v22M10 0v22M18 0v22" stroke="#f8b750" stroke-width="4"/></svg></button>
    </div>
    <div class="low-r flex-grow-1 d-flex flex-column justify-content-end align-items-center">
      <button class="hp or io-b">I·O</button>
      <button class="hp up">S</button><button class="hp dn">R</button>
      <button class="hp or">M</button><button class="hp dk">D</button><button class="hp dk">✕</button>
    </div>
  </aside>
</main>

<section class="chain d-flex flex-shrink-0">
  <div class="grip align-self-center"><i></i><i></i><i></i><i></i><i></i><i></i><i></i><i></i><i></i><i></i></div>
  <article class="dev d1 d-flex flex-column">
    <div class="dh d-flex align-items-center"><button class="dot-on" aria-label="Device on"></button><span class="me-auto">Four FX Morpher</span>
      <button class="ic" aria-label="Editor window"><svg width="25" height="25"><circle cx="12.500" cy="12.500" r="11" fill="none" stroke="#4b4b4b" stroke-width="2"/><path d="M8 8h9v9H8zM8 5v3M17 5v3M8 17v3M17 17v3M5 8h3M17 8h3M5 17h3M17 17h3" fill="none" stroke="#000" stroke-width="2"/></svg></button>
      <button class="ic" aria-label="Hot swap"><svg width="25" height="25"><circle cx="12.500" cy="12.500" r="11" fill="none" stroke="#4b4b4b" stroke-width="2"/><path d="M7 14q0-6 6-6M18 11q0 6-6 6" fill="none" stroke="#000" stroke-width="2"/><path d="M4 13h7l-4 5zM14 12h7l-3-5z"/></svg></button>
      <button class="ic" aria-label="Save preset"><svg width="25" height="25"><circle cx="12.500" cy="12.500" r="11" fill="none" stroke="#4b4b4b" stroke-width="2"/><path d="M6 6h10l3 3v10H6z"/><path d="M9 8h7v4H9z" fill="#a4a4a4"/></svg></button>
    </div>
    <div class="db flex-grow-1 d-flex flex-column align-items-center">
      <svg class="me-2" width="253" height="60" role="img" aria-label="OSCiLLOT"><g fill="none" stroke="#5a5b60" stroke-width="4"><path d="M184 57H10q-8 0-8-8V10q0-8 8-8H243q8 0 8 8V49q0 8-8 8h-3"/><path d="M187 57h22" stroke-width="9"/><path d="M209 57h18" stroke-width="5"/></g><text x="47" y="35" fill="#5a5b60" font-family="Liberation Sans" font-weight="700" font-size="30">OSCiLLOT</text><text x="51" y="46" fill="#5a5b60" font-family="Liberation Sans" font-weight="700" font-size="8" letter-spacing="2">MODULAR SYNTHESIZER</text></svg>
      <div class="d-flex align-items-center w-100" style="margin-top:33px"><button class="hide-ed">Hide Editor</button><button class="ms-auto p-0 border-0 d-flex align-items-center justify-content-center unf" aria-label="Unfold"><svg width="11" height="13"><path d="M0 0l11 6L0 13z"/></svg></button></div>
      <div style="height:2px;width:272px;background:#55565a;margin:21px 0 9px"></div>
      <div class="lcd">
        <div class="d-flex justify-content-between"><select aria-label="Voices"><option>Mono</option></select><button>Eco Off</button></div>
        <div class="d-flex" style="margin-top:13px"><span style="width:139px;padding-left:3px">ACTIVE VOICES:</span><svg width="104" height="17"><text x="5" y="12" fill="#f6ce55" font-size="15" font-family="Liberation Sans">1</text><path d="M0 16h104" stroke="#7d682f" stroke-width="2" stroke-dasharray="13 5"/></svg></div>
        <div style="height:2px;background:#7d682f;margin:8px 0 9px 2px"></div>
        <div class="d-flex justify-content-between text-nowrap"><span>OSCiLLOT 1.1.3</span><span>LIVE</span><span>10130 MAX 817</span></div>
      </div>
    </div>
  </article>
  <svg class="mini align-self-center mx-1" width="14" height="78"></svg>
  <article class="dev d2 d-flex flex-column">
    <div class="dh d-flex align-items-center"><button class="dot-on" aria-label="Device on"></button><span>Limiter</span>
      <svg class="me-auto" width="20" height="22"><path d="M5 12V4M9 10V2M13 11V3M17 13V7M5 14L1 10" stroke="#3a36ee" stroke-width="3" stroke-linecap="round"/><path d="M4 9h14v6l-4 7H9l-6-8z" fill="#3a36ee"/></svg>
      <button class="ic" aria-label="Hot swap"><svg width="25" height="25"><circle cx="12.500" cy="12.500" r="11" fill="none" stroke="#4b4b4b" stroke-width="2"/><path d="M7 14q0-6 6-6M18 11q0 6-6 6" fill="none" stroke="#000" stroke-width="2"/><path d="M4 13h7l-4 5zM14 12h7l-3-5z"/></svg></button>
      <button class="ic" aria-label="Save preset"><svg width="25" height="25"><circle cx="12.500" cy="12.500" r="11" fill="none" stroke="#4b4b4b" stroke-width="2"/><path d="M6 6h10l3 3v10H6z"/><path d="M9 8h7v4H9z" fill="#a4a4a4"/></svg></button>
    </div>
    <div class="db d-flex justify-content-between">
      <div class="dcol d-flex flex-column align-items-center">
        <span class="la">Gain</span><svg class="knob" data-pan="1" width="50" height="60"></svg><span class="la">0.00 dB</span>
        <label class="la align-self-start" for="lk" style="margin-top:9px">Lookahead</label>
        <select class="sel-live" id="lk" style="width:100px;margin-right:-8px"><option>3 ms</option></select>
        <span class="la" style="margin-top:22px">Release</span><svg class="knob" data-r="25" width="50" height="50" data-val="96" data-c="#c6c6c6" data-b="#666" data-n="#666"></svg>
        <span class="la" style="margin-top:-3px">300 ms</span><button class="bx lit w-100">Auto</button>
      </div>
      <div style="width:90px">
        <label class="la" for="cl">Ceiling</label><input class="bx w-100 d-block" id="cl" style="background:#c3c3c3" value="-0.30 dB">
        <button class="bx lit w-100 d-block mt-2">Stereo</button>
        <div class="d-flex justify-content-end" style="margin-top:13px;gap:6px;padding-right:5px"><svg width="16" height="193" style="margin-top:13px"><path d="M0 0h16v193H0z" fill="#2a2a2a"/></svg>
          <div class="scale-col"><div style="padding-right:8px">0</div><div>-6</div><div>-12</div><div>-18</div><div>-24</div><div>-30</div><div>-36</div><div>-42</div></div></div>
      </div>
    </div>
  </article>
  <svg class="mini align-self-center mx-1" width="14" height="78"></svg>
  <div class="drop flex-grow-1 d-flex align-items-center justify-content-center">Déposer ici les effets audio</div>
</section>

<footer class="status d-flex flex-shrink-0">
  <button class="rnd flex-shrink-0" aria-label="Info view"><svg width="22" height="22"><path d="M1 1l20 9v2L1 21z" fill="#6e6e6e"/></svg></button>
  <div class="sbox flex-grow-1"></div>
  <div class="sbox s2"></div>
  <div class="tab-dev d-flex align-items-center justify-content-between"><span>1-Four FX Morpher</span>
    <svg width="54" height="31"><path d="M0 0h29v31H0z" fill="#8a8a8a"/><path d="M32 0h21v31H32z" fill="#909090"/><path d="M32 0h21v4H32z" fill="#c5dde6"/><path d="M43 9h8v3h-8zM34 27h8v3h-8z" fill="#d29a3a"/><path d="M47 13v16" stroke="#333" stroke-width="2"/><path d="M30 15v4" stroke="#3fcf55" stroke-width="2"/><path d="M0 0h29v3H0z" fill="#a5a5a5"/><text x="0" y="25" font-size="15" font-family="Inter">Fou</text></svg></div>
  <button class="rnd flex-shrink-0" aria-label="Detail view"><svg width="22" height="22"><path d="M10 1h2l9 19q0 2-2 2H3q-2 0-2-2z" fill="#747474"/></svg></button>
</footer>
<div class="desk"></div>

<script src="https://cdn.jsdelivr.net/npm/bootstrap@5.3.0/dist/js/bootstrap.bundle.min.js"></script>
<script>
  // module categories
  document.getElementById('cats').innerHTML = [['In/Out','#c54a49'],['Oscillator','#d07553'],['Sampler','#b18d6b'],['Modulator','#c4c677'],['Processor','#b8a750'],['Filter','#8fac41'],['Mixer','#5bb487'],['VCA','#57b9b9'],['Shaper','#87b5b0'],['Effect','#5a9bc0'],['Sequencer','#3c7dbe'],['Logic','#9785e6'],['Utility','#cb5799']]
    .map(c => `<li><a href="#"><i style="background:${c[1]}"></i>${c[0]}</a></li>`).join('');

  // scenes of the master track
  document.getElementById('scenes').innerHTML = [1,2,3,4,5,6,7,8,9].map(n =>
    `<button class="slot flex-fill" ${n === 1 ? 'style="background:#a4a4a4"' : ''}><svg width="16" height="18"><path d="M0 1l16 8-16 8z" fill="#5a5a5a"/></svg><span>${n}</span></button>`).join('');

  // rotary knobs; angles are degrees clockwise from the top
  const pt = (cx, cy, r, a) => [cx + r * Math.sin(a * Math.PI / 180), cy - r * Math.cos(a * Math.PI / 180)].map(v => v.toFixed(1)).join(' ');
  const arc = (cx, cy, r, a, b, c, w) => b <= a ? '' : `<path d="M${pt(cx, cy, r, a)}A${r} ${r} 0 ${b - a > 180 ? 1 : 0} 1 ${pt(cx, cy, r, b)}" fill="none" stroke="${c}" stroke-width="${w}"/>`;
  document.querySelectorAll('.knob').forEach(s => {
    const d = s.dataset;
    if (d.pan) {
      s.innerHTML = arc(25, 34, 22, -150, -12, '#2a2a2a', 4) + arc(25, 34, 22, 12, 150, '#2a2a2a', 4) +
        '<path d="M25 12v24" stroke="#2a2a2a" stroke-width="4"/><path d="M18 0h14l-7 8z" fill="#2a2a2a"/>';
      return;
    }
    const R = +(d.r || 31), c = (s.getAttribute('width') || 62) / 2, r = R - 3, w = R > 26 ? 5 : 4;
    if (!s.getAttribute('width')) { s.setAttribute('width', 62); s.setAttribute('height', 62); }
    const from = +(d.from || -150), to = +(d.to || 150), v = +d.val;
    s.innerHTML = arc(c, c, r, from, v, d.c || '#f9cf52', w) + arc(c, c, r, v + 9, to, d.b || '#262626', w) +
      `<path d="M${c} ${c}L${pt(c, c, R - 1, v)}" stroke="${d.n || '#6b6b6b'}" stroke-width="5" stroke-linecap="round"/>` +
      (d.cue ? '<path d="M21 51q-4-2-4-6 0-5 8-5t8 5q0 4-4 6M21 45v7M29 45v7" fill="none" stroke="#2a2a2a" stroke-width="2.5"/>' : '');
  });

  // level meters with their dB scale
  document.querySelectorAll('.meter').forEach((s, k) => {
    const p = +s.dataset.peak, m = +s.dataset.mid, l = +s.dataset.lev;
    let h = `<defs><linearGradient id="lg${k}" x2="0" y2="1"><stop stop-color="#9ff77b"/><stop offset=".8" stop-color="#6ff57a"/></linearGradient></defs>`;
    for (const x of [1, 12]) h += `<rect x="${x}" width="10" height="526" fill="#272727"/><rect x="${x}" y="${m}" width="10" height="${l - m}" fill="#658d4d"/><rect x="${x}" y="${l}" width="10" height="${526 - l}" fill="url(#lg${k})"/><rect x="${x}" y="${p - 1}" width="10" height="2" fill="#b6e87a"/><rect x="${x}" y="52" width="10" height="1" fill="#999"/>`;
    h += '<path d="M25 53l18-8v17z" fill="#a9a9a9" stroke="#555" stroke-width="2"/>';
    [[11,6,1],[53,0],[106,6],[158,12],[210,18],[262,24],[316,30],[362,36],[402,42],[437,48],[468,54],[496,60]].forEach(t => {
      h += `<text x="65" y="${t[0] + 7}" text-anchor="end" font-size="19">${t[1]}</text>`;
      if (t[1] || t[2]) h += `<path d="M26 ${t[2] || t[0]}h8" stroke="#000" stroke-width="2"/>`;
    });
    s.innerHTML = h + '<path d="M26 517h8" stroke="#666" stroke-width="2"/>';
  });
  document.querySelectorAll('.mini').forEach(s => {
    s.innerHTML = [2, 8].map(x => `<rect x="${x}" width="4" height="78" fill="#2a2a2a"/><rect x="${x}" y="8" width="4" height="2" fill="#888"/><rect x="${x}" y="18" width="4" height="2" fill="#b6e87a"/><rect x="${x}" y="21" width="4" height="12" fill="#658d4d"/><rect x="${x}" y="33" width="4" height="45" fill="#7cf77a"/>`).join('');
  });

  // repeatable noise
  let seed = 7; const rnd = () => (seed = (seed * 16807) % 2147483647) / 2147483647;

  // sample waveform, two channels: [x, half height]
  const env = [[0,33],[20,34],[30,24],[42,20],[47,8],[54,8],[57,28],[63,40],[68,28],[80,34],[85,22],[92,20],[96,15],[105,18],[108,34],[114,20],[118,8],[124,4],[136,4],[139,18],[150,27],[162,31],[172,22],[184,20],[190,34],[196,20],[208,26],[216,16],[222,36],[228,18],[236,14],[242,4],[285,3],[288,28],[292,40],[299,36],[302,17],[312,20],[317,42],[322,18],[334,16],[339,42],[345,34],[350,16],[360,40],[365,18],[378,18],[384,11],[398,9],[403,34],[408,7],[416,34],[421,10],[440,8],[458,18],[466,8],[485,5],[500,14],[510,7],[519,3]];
  let w = '';
  for (let x = 0; x < 519; x += 3) {
    let i = 0; while (i < env.length - 2 && env[i + 1][0] <= x) i++;
    const [a, ya] = env[i], [b, yb] = env[i + 1], v = ya + (yb - ya) * (x - a) / (b - a);
    const u = Math.max(2, Math.round(v * (.58 + rnd() * .4))), d = Math.max(2, Math.round(v * (.55 + rnd() * .42)));
    for (const y of [47, 149]) w += `<rect x="${x}" y="${y - u}" width="3" height="${u + d}"/>`;
  }
  document.getElementById('wave').innerHTML = `<g fill="#9d9d9d" shape-rendering="crispEdges">${w}<rect x="109" width="4" height="196"/></g><path d="M0 99h519" stroke="#37383c" stroke-width="2"/><path d="M263 98h5M263 197h5" stroke="#9d9d9d" stroke-width="2"/>
    <g fill="#6f7072" font-family="Liberation Sans" font-size="19"><text x="511" y="20" text-anchor="end">TEMP-558_3625915966_Age of Technology.aif</text><text x="12" y="194">Zoom 100 %</text><text x="507" y="192" text-anchor="end">00:00:03.393</text></g>`;

  // XY oscilloscope
  const tall = {11:62,36:68,47:15,61:71,133:98,158:103,182:90,227:68,251:72,257:76,275:90,283:55,22:52,105:50,120:45,144:50,153:50,178:55,207:52};
  let sc = '';
  for (let x = 0; x <= 295; x += 1) {
    const swing = (x % 4 < 2 ? 1 : -1) * rnd() * 42 + 14 * Math.sin(x / 3.7);
    let y = 115 + swing * (.7 + x / 600);
    if (tall[x]) y = 128 - tall[x];
    if (x % 41 === 16) y = 150 + rnd() * 12;
    sc += `${x ? 'L' : 'M'}${x} ${Math.round(Math.min(y, 162))}`;
  }
  document.getElementById('scope').innerHTML = `<path d="M0 7h295M0 58h295M0 110h295M0 163h295M0 214h295M148 0v222" stroke="#2e2e2e" stroke-width="1"/><path d="${sc}" fill="none" stroke="#73f0dc" stroke-width="1.500"/><circle cx="61" cy="145" r="16" fill="#ff0"/>`;

  // LFO shape: trapezoid between -1 and 1
  let g = '';
  for (let i = 0; i < 140; i++) {
    const x = Math.round(3 + i * 6.780), q = x / 950;
    const v = q < .085 ? q / .085 : q < .42 ? 1 : q < .58 ? (.5 - q) / .08 : q < .92 ? -1 : (q - 1) / .08;
    const y = Math.round(69 - v * 67);
    g += `<rect x="${x}" y="${Math.min(y, 69)}" width="4" height="${Math.abs(y - 69) + 1}" fill="#39646d"/><rect x="${x}" y="${y - (v > 0 ? 2 : 1)}" width="4" height="4" fill="#63e3fa"/>`;
  }
  document.getElementById('lfo').innerHTML = g;

  // patch cables
  document.getElementById('wires').innerHTML = ['M445 547V573','M445 547C445 597 748 523 748 574','M445 547C445 600 1376 505 1376 567','M445 547C445 610 1636 500 1636 564','M932 574C932 530 2304 640 2304 589','M445 816C445 870 959 800 959 858','M747 816C747 870 1021 795 1021 858','M1083 858C1083 800 1376 870 1376 811','M1148 858C1148 795 1636 870 1636 806','M464 1021C505 930 918 1308 959 1217','M464 1261V1294','M464 1261C464 1310 719 1245 719 1295','M2081 1146C2132 1268 2253 226 2304 348']
    .map(p => `<path d="${p}" stroke="#7d7d7d" stroke-width="7"/><path d="${p}" stroke="#b0b0b0" stroke-width="4"/>`).join('');
</script>
</body>
</html>
